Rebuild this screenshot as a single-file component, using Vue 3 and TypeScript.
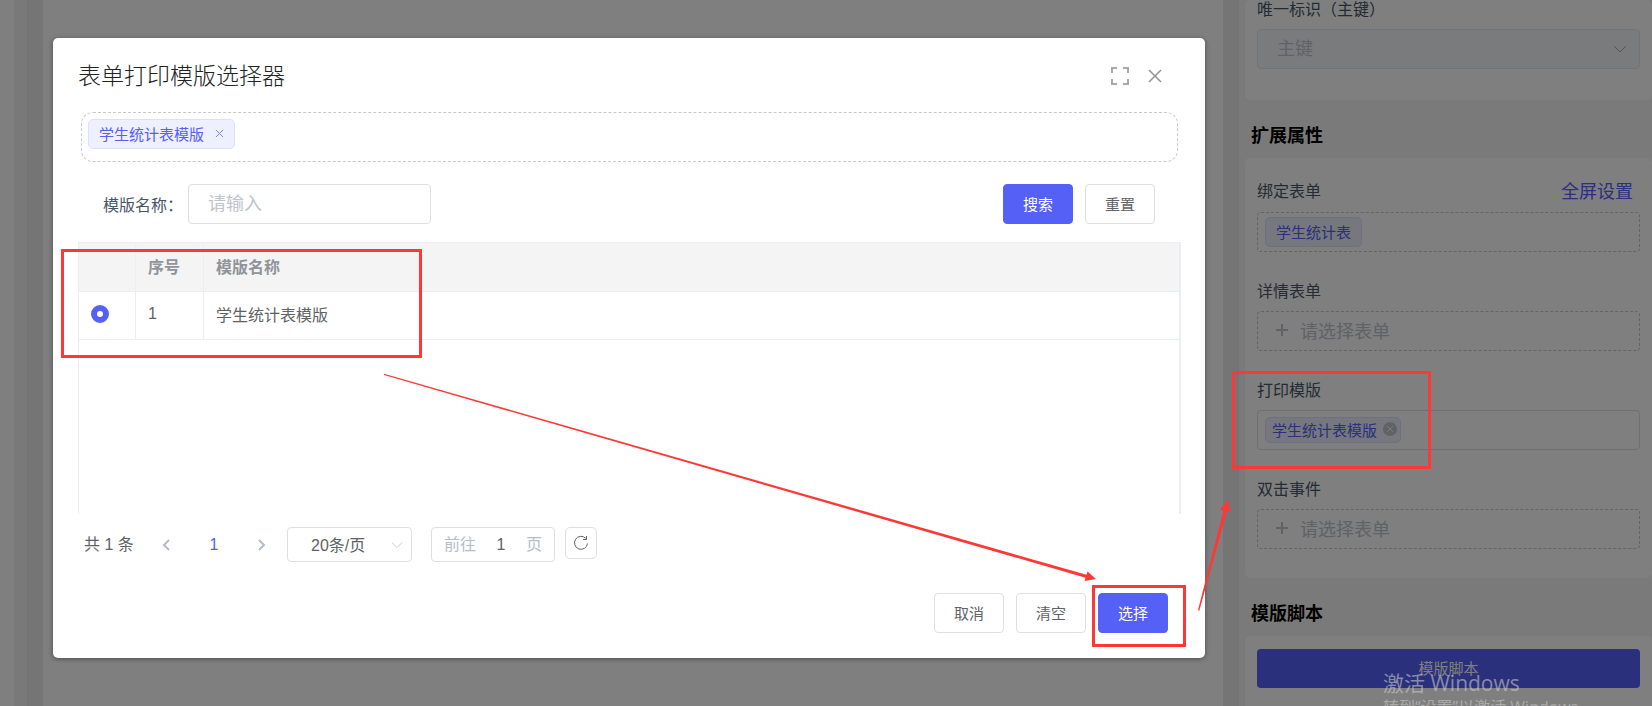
<script setup lang="ts">
import { ref } from 'vue'

interface TemplateRow {
  id: number
  name: string
}

const rows: TemplateRow[] = [{ id: 1, name: '学生统计表模版' }]
const picked = ref<number>(1)
const keyword = ref<string>('')
const pageSize = ref<string>('20条/页')
const jumpTo = ref<string>('1')
const primaryKey = ref<string>('主键')
</script>

<template>
  <div class="page">
    <div class="workspace">
      <div class="rail"></div>
      <div class="gutter gutter-left"></div>
      <div class="gutter gutter-dark"></div>
      <main class="canvas"></main>
      <div class="gutter gutter-dark gutter-right"></div>
      <aside class="panel">
        <section class="card card-first">
          <div class="field">
            <label class="field-label" for="primary-key">唯一标识（主键）</label>
            <div class="select-wrap">
              <select id="primary-key" v-model="primaryKey" class="field-select" disabled>
                <option>主键</option>
              </select>
              <svg class="chevron chevron-field" viewBox="0 0 14 8"><path d="M1 1l6 6 6-6" /></svg>
            </div>
          </div>
        </section>

        <h3 class="section-title">扩展属性</h3>
        <section class="card">
          <div class="field">
            <div class="field-head">
              <span>绑定表单</span>
              <a href="#">全屏设置</a>
            </div>
            <div class="box dashed"><span class="tag">学生统计表</span></div>
          </div>
          <div class="field">
            <span class="field-label">详情表单</span>
            <button type="button" class="box dashed adder">
              <svg class="plus" viewBox="0 0 12 12"><path d="M6 0v12M0 6h12" /></svg>请选择表单
            </button>
          </div>
          <div class="field">
            <span class="field-label">打印模版</span>
            <div class="box">
              <span class="tag tag-small">学生统计表模版
                <button type="button" class="round-close" aria-label="移除">
                  <svg viewBox="0 0 14 14"><circle cx="7" cy="7" r="7" /><path d="M4 4l6 6M10 4l-6 6" /></svg>
                </button>
              </span>
            </div>
          </div>
          <div class="field">
            <span class="field-label">双击事件</span>
            <button type="button" class="box dashed adder">
              <svg class="plus" viewBox="0 0 12 12"><path d="M6 0v12M0 6h12" /></svg>请选择表单
            </button>
          </div>
        </section>

        <h3 class="section-title">模版脚本</h3>
        <section class="card card-script">
          <button type="button" class="script-button">模版脚本</button>
        </section>
      </aside>
    </div>

    <div class="overlay">
      <div class="dialog" role="dialog" aria-labelledby="dialog-title">
        <header class="dialog-head">
          <h2 id="dialog-title">表单打印模版选择器</h2>
          <button type="button" class="icon-button" aria-label="全屏">
            <svg viewBox="0 0 20 20" class="thick"><path d="M2 7V2h5M13 2h5v5M18 13v5h-5M7 18H2v-5" /></svg>
          </button>
          <button type="button" class="icon-button" aria-label="关闭">
            <svg viewBox="0 0 20 20" class="cross"><path d="M4 4l12 12M16 4L4 16" /></svg>
          </button>
        </header>

        <div class="chosen">
          <span class="tag">学生统计表模版
            <button type="button" class="tag-close" aria-label="移除">
              <svg viewBox="0 0 10 10"><path d="M1 1l8 8M9 1L1 9" /></svg>
            </button>
          </span>
        </div>

        <form class="filters" @submit.prevent>
          <label for="template-name">模版名称：</label>
          <input id="template-name" v-model="keyword" type="text" placeholder="请输入" />
          <button type="submit" class="btn primary">搜索</button>
          <button type="reset" class="btn">重置</button>
        </form>

        <div class="table-area">
          <table>
            <colgroup>
              <col class="col-radio" />
              <col class="col-index" />
              <col />
            </colgroup>
            <thead>
              <tr>
                <th></th>
                <th>序号</th>
                <th>模版名称</th>
              </tr>
            </thead>
            <tbody>
              <tr v-for="row in rows" :key="row.id">
                <td><input v-model="picked" type="radio" name="template" :value="row.id" :aria-label="row.name" /></td>
                <td>{{ row.id }}</td>
                <td>{{ row.name }}</td>
              </tr>
            </tbody>
          </table>
        </div>

        <nav class="pagination">
          <span class="total">共 1 条</span>
          <button type="button" class="pager" aria-label="上一页">
            <svg viewBox="0 0 8 12"><path d="M7 1L2 6l5 5" /></svg>
          </button>
          <button type="button" class="pager current">1</button>
          <button type="button" class="pager" aria-label="下一页">
            <svg viewBox="0 0 8 12"><path d="M1 1l5 5-5 5" /></svg>
          </button>
          <div class="select-wrap size-wrap">
            <select v-model="pageSize" class="size-select" aria-label="每页条数">
              <option>20条/页</option>
            </select>
            <svg class="chevron chevron-size" viewBox="0 0 14 8"><path d="M1 1l6 6 6-6" /></svg>
          </div>
          <label class="jump">前往<input v-model="jumpTo" type="text" />页</label>
          <button type="button" class="refresh" aria-label="刷新">
            <svg viewBox="0 0 16 16"><path d="M14.500 8.500A6.500 6.500 0 1 1 12.800 3.400" /><path d="M13.500 1v3.500H10" /></svg>
          </button>
        </nav>

        <footer class="dialog-foot">
          <button type="button" class="btn">取消</button>
          <button type="button" class="btn">清空</button>
          <button type="button" class="btn primary">选择</button>
        </footer>
      </div>

      <svg class="marks" width="1652" height="706" viewBox="0 0 1652 706">
        <rect x="62.500" y="250.500" width="358" height="106" />
        <rect x="1093.500" y="586.500" width="91" height="59" />
        <rect x="1233.500" y="372.500" width="196" height="95" />
        <path d="M384 373.800L1086.500 574.800l1-3.300 8.500 7.500-11.500 2 1-3.300L384 375Z" />
        <path d="M1198 610L1223.500 510.500l-3.500-1 8-9.500 2.500 12-3.500-1L1199.200 611Z" />
      </svg>
    </div>

    <div class="watermark">
      <p class="watermark-title">激活 Windows</p>
      <p>转到“设置”以激活 Windows。</p>
    </div>
  </div>
</template>

<style>
body {
  margin: 0;
  overflow: hidden;
}
</style>

<style scoped>
* {
  box-sizing: border-box;
}

.page {
  height: 100vh;
  overflow: hidden;
  position: relative;
  background: #fff;
  color: #606266;
  font-family: "Liberation Sans", "Noto Sans CJK SC", sans-serif;
  font-size: 16px;
}

button,
input,
select {
  font: inherit;
  color: inherit;
  margin: 0;
  padding: 0;
  border: 0;
  background: none;
}

svg {
  fill: none;
  stroke: currentColor;
  display: block;
}

h2,
h3,
p {
  margin: 0;
}

.workspace {
  display: flex;
  height: 100%;
}

.rail {
  width: 14px;
}

.gutter {
  width: 15px;
  background: #ebebeb;
}

.gutter-left {
  width: 14px;
  background: #f2f2f2;
  border-right: 1px solid #e6e6f0;
}

.gutter-right {
  width: 14px;
}

.canvas {
  flex: 1;
}

.panel {
  width: 415px;
  padding-left: 6px;
  background: #f4f4f4;
  border-left: 2px solid #e6e6f0;
}

.card {
  padding: 20px 12px 29px;
  background: #fff;
  border-radius: 5px;
}

.card-first {
  padding-top: 0;
  padding-bottom: 31px;
}

.card-script {
  padding-top: 13px;
}

.section-title {
  padding: 24px 6px 10px;
  line-height: 24px;
  font-size: 18px;
  font-weight: 700;
  color: #000;
}

.field + .field {
  margin-top: 30px;
}

.field-label {
  display: block;
  line-height: 20px;
  margin-bottom: 9px;
  color: #475669;
}

.field-head {
  display: flex;
  justify-content: space-between;
  align-items: center;
  height: 24px;
  margin-bottom: 10px;
  padding-right: 7px;
  color: #475669;
}

.field-head a {
  color: #5560f6;
  font-size: 18px;
  text-decoration: none;
}

.box {
  display: flex;
  align-items: center;
  width: 100%;
  height: 40px;
  padding: 0 7px;
  border: 1px solid #dcdfe6;
  border-radius: 4px;
}

.dashed {
  border: 1px dashed #c8c8c8;
}

.adder {
  padding: 0 18px 3px;
  gap: 12px;
  font-size: 18px;
  color: #c0c4cc;
}

.plus {
  width: 12px;
  height: 12px;
  stroke-width: 2;
}

.tag {
  display: inline-flex;
  align-items: center;
  height: 30px;
  padding: 0 10px 2px;
  font-size: 15px;
  color: #5560f6;
  background: #eeefff;
  border: 1px solid #dddfff;
  border-radius: 5px;
}

.tag-small {
  height: 26px;
  padding: 0 3px 2px 6px;
  gap: 6px;
}

.round-close,
.round-close svg {
  width: 14px;
  height: 14px;
}

.round-close circle {
  fill: #c0c4cc;
  stroke: none;
}

.round-close path {
  stroke: #f4f4f4;
}

.select-wrap {
  display: grid;
  align-items: center;
}

.select-wrap > * {
  grid-area: 1 / 1;
}

select {
  appearance: none;
  width: 100%;
  opacity: 1;
}

.chevron {
  justify-self: end;
  width: 14px;
  height: 8px;
  color: #c0c4cc;
  pointer-events: none;
}

.chevron-field {
  margin-right: 13px;
  color: #a8abb2;
}

.chevron-size {
  width: 12px;
  margin-right: 9px;
}

.field-select {
  height: 40px;
  padding-left: 19px;
  font-size: 18px;
  color: #c0c4cc;
  background: #f5f7fa;
  border: 1px solid #e4e7ed;
  border-radius: 4px;
}

.script-button {
  width: 100%;
  height: 39px;
  padding-bottom: 2px;
  font-size: 15px;
  color: #fff;
  background: #5560f6;
  border-radius: 4px;
}

.overlay {
  position: absolute;
  inset: 0;
  padding: 38px 447px 48px 53px;
  background: rgba(0, 0, 0, 0.5);
}

.dialog {
  padding-bottom: 25px;
  background: #fff;
  border-radius: 5px;
  box-shadow: 0 1px 5px rgba(0, 0, 0, 0.4);
}

.dialog-head {
  display: flex;
  align-items: center;
  gap: 15px;
  padding: 25px 40px 23px 25px;
}

.dialog-head h2 {
  flex: 1;
  font-size: 23px;
  line-height: 26px;
  font-weight: 300;
  color: #222;
}

.icon-button,
.icon-button svg {
  width: 20px;
  height: 20px;
  color: #909399;
}

.thick {
  stroke-width: 2;
  opacity: 0.8;
}

.cross {
  stroke-width: 1.5;
}

.chosen {
  height: 50px;
  margin: 0 27px 0 28px;
  padding: 6px;
  border: 1px dashed #c8c8c8;
  border-radius: 12px;
}

.chosen .tag {
  gap: 11px;
}

.tag-close {
  opacity: 0.8;
}

.tag-close,
.tag-close svg {
  width: 9px;
  height: 9px;
}

.filters {
  display: flex;
  align-items: center;
  margin-top: 22px;
  padding: 0 50px;
}

.filters label {
  width: 85px;
  color: #475669;
}

.filters input {
  width: 243px;
  height: 40px;
  margin-right: auto;
  padding: 0 19px;
  font-size: 18px;
  border: 1px solid #dcdfe6;
  border-radius: 4px;
}

input::placeholder {
  color: #c0c4cc;
}

.btn {
  width: 70px;
  height: 40px;
  padding-bottom: 2px;
  font-size: 15px;
  border: 1px solid #dcdfe6;
  border-radius: 4px;
}

.btn + .btn {
  margin-left: 12px;
}

.primary {
  color: #fff;
  background: #5560f6;
  border-color: #5560f6;
}

.table-area {
  min-height: 272px;
  margin: 18px 24px 0 25px;
  border: solid #ebeef5;
  border-width: 1px 2px 0 1px;
}

table {
  width: 100%;
  table-layout: fixed;
  border-collapse: separate;
  border-spacing: 0;
}

.col-radio {
  width: 57px;
}

.col-index {
  width: 68px;
}

th,
td {
  height: 49px;
  padding: 0 12px 3px;
  text-align: left;
  border-bottom: 1px solid #ebeef5;
}

td {
  height: 48px;
}

th:not(:last-child),
td:not(:last-child) {
  border-right: 1px solid #ebeef5;
}

th {
  background: #f4f4f4;
  color: #909399;
  font-weight: 700;
}

input[type="radio"] {
  appearance: none;
  display: block;
  width: 18px;
  height: 18px;
  border: 1px solid #dcdfe6;
  border-radius: 50%;
}

input[type="radio"]:checked {
  border: 6px solid #5560f6;
  background: #fff;
}

.pagination {
  display: flex;
  align-items: flex-start;
  margin-top: 13px;
  padding-left: 31px;
  line-height: 35px;
}

.total {
  width: 58px;
}

.pager {
  display: grid;
  place-items: center;
  width: 48px;
  height: 35px;
  color: #b4bccc;
}

.pager svg {
  width: 8px;
  height: 12px;
  stroke-width: 2;
}

.pager.current {
  color: #5560f6;
}

.size-wrap {
  width: 125px;
  margin: 0 19px 0 1px;
}

.size-select {
  height: 35px;
  padding-left: 23px;
  border: 1px solid #dcdfe6;
  border-radius: 4px;
}

.jump {
  display: flex;
  align-items: center;
  width: 124px;
  height: 35px;
  padding: 0 12px;
  color: #b4bccc;
  border: 1px solid #dcdfe6;
  border-radius: 4px;
}

.jump input {
  flex: 1;
  min-width: 0;
  text-align: center;
  color: #606266;
}

.refresh {
  display: grid;
  place-items: center;
  width: 32px;
  height: 32px;
  margin-left: 10px;
  border: 1px solid #dcdfe6;
  border-radius: 5px;
}

.refresh svg {
  width: 16px;
  height: 16px;
}

.dialog-foot {
  display: flex;
  justify-content: flex-end;
  margin-top: 31px;
  padding-right: 37px;
}

.marks {
  position: absolute;
  left: 0;
  top: 0;
  pointer-events: none;
}

.marks rect {
  stroke: #ff3835;
  stroke-width: 3;
}

.marks path {
  fill: #ff3835;
  stroke: none;
}

.watermark {
  position: absolute;
  left: 1383px;
  top: 669px;
  font-family: "Open Sans", "Noto Sans CJK SC", sans-serif;
  font-size: 16px;
  line-height: 20px;
  color: rgba(200, 200, 200, 0.6);
  white-space: nowrap;
  pointer-events: none;
}

.watermark-title {
  font-size: 21px;
  line-height: 28px;
}
</style>
